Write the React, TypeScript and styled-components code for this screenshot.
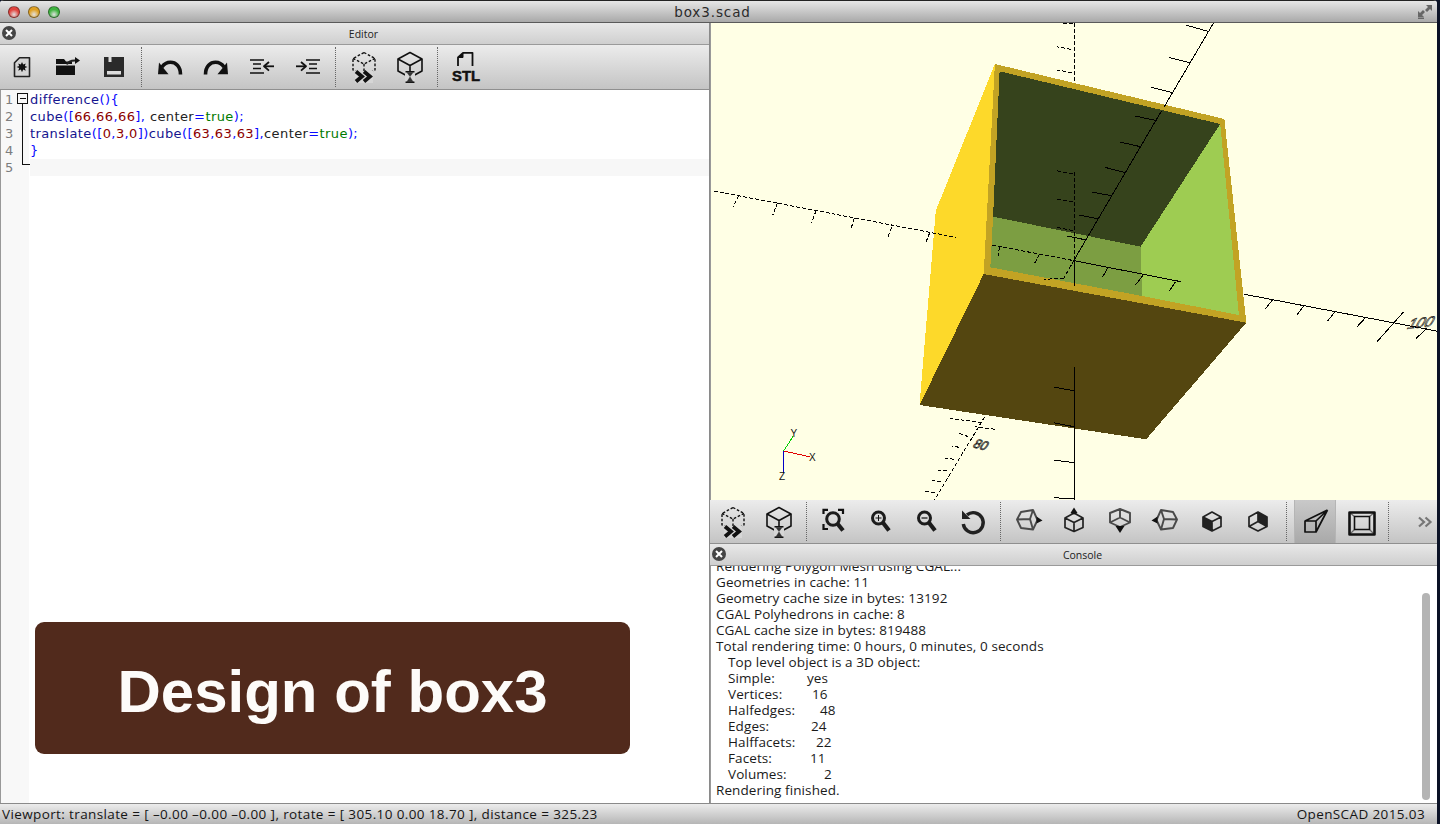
import React from "react";
import styled, { createGlobalStyle } from "styled-components";

const UI = `"Open Sans", "Noto Sans", "DejaVu Sans", sans-serif`;
const CODE = `"DejaVu Sans", "Open Sans", sans-serif`;

const Global = createGlobalStyle`
  html, body { margin: 0; padding: 0; background: #0b1226; overflow: hidden; }
  #root { width: 1440px; height: 824px; }
`;

const Window = styled.div`
  width: 1437px; height: 824px; display: flex; flex-direction: column; overflow: hidden;
  font-family: ${UI}; border-radius: 4px 4px 0 0; color: #111; background: #ddd;
`;
const TitleBar = styled.header`
  height: 23px; flex: none; box-sizing: border-box; position: relative;
  display: flex; align-items: center; justify-content: center; padding-right: 12px;
  background: linear-gradient(#e6e6e6, #a9a9a9); border-bottom: 1px solid #5a5a5a; border-top: 1px solid #222;
  font-family: ${CODE}; font-size: 13.5px; letter-spacing: 0.9px; color: #2b2b2b;
`;
const Lights = styled.div`
  position: absolute; left: 8px; top: 5px; display: flex; gap: 8px;
`;
const Light = styled.span<{ $c: string }>`
  width: 12px; height: 12px; border-radius: 50%; box-sizing: border-box; border: 1px solid rgba(0,0,0,.4);
  background: radial-gradient(circle at 50% 75%, #fff8 0%, ${p => p.$c} 55%, ${p => p.$c} 100%);
`;
const FullScreen = styled.svg`position: absolute; right: 5px; top: 4px;`;
const Main = styled.main`flex: 1; min-height: 0; display: flex;`;
const EditorPane = styled.section`
  width: 710px; flex: none; box-sizing: border-box; display: flex; flex-direction: column; border-right: 1px solid #8a8a8a;
`;
const RightPane = styled.section`flex: 1; min-width: 0; display: flex; flex-direction: column;`;
const DockTitle = styled.div`
  height: 22px; flex: none; box-sizing: border-box; position: relative; display: flex; align-items: center; justify-content: center;
  padding-left: 18px;
  background: linear-gradient(#e8e8e8, #cfcfcf); border-bottom: 1px solid #9a9a9a; font-size: 10.5px; color: #222;
`;
const CloseBadge = styled.span`
  position: absolute; left: 2px; top: 3px; width: 14px; height: 14px; border-radius: 50%; background: #454545;
  display: flex; align-items: center; justify-content: center;
`;
const Toolbar = styled.div<{ $h: number; $off: number }>`
  height: ${p => p.$h}px; flex: none; box-sizing: border-box; display: flex; align-items: center; padding-left: ${p => p.$off}px;
  background: linear-gradient(#ececec, #c4c4c4); border-bottom: 1px solid #8f8f8f;
  margin-left: ${p => (p.$off < 0 ? p.$off : 0)}px;
`;
const ToolButton = styled.div<{ $w?: number; $on?: boolean }>`
  width: ${p => p.$w ?? 46}px; align-self: stretch; flex: none; display: flex; align-items: center; justify-content: center;
  ${p => p.$on && `background: linear-gradient(#c9c9c9, #a9a9a9); border-left: 1px solid #b5b5b5; border-right: 1px solid #b5b5b5; box-sizing: border-box; margin: 0 2px;`}
`;
const Sep = styled.i<{ $l: number; $r: number }>`
  flex: none; align-self: stretch; width: 0; margin: 2px ${p => p.$r}px 2px ${p => p.$l}px; border-left: 1px dotted #666;
`;
const Overflow = styled.div`margin-left: auto; margin-right: 2px; width: 18px; display: flex;`;
const EditorBody = styled.div`flex: 1; min-height: 0; position: relative; display: flex; background: #fff; border-left: 1px solid #999;`;
const Gutter = styled.div`
  width: 28px; flex: none; background: #f8f8f8; box-sizing: border-box; padding-top: 1px; position: relative;
`;
const LineNo = styled.div`
  height: 17px; line-height: 17px; font-family: ${CODE}; font-size: 13px; color: #7d7d7d; padding-left: 4px;
`;
const Fold = styled.svg`position: absolute; left: 16px; top: 2px;`;
const Code = styled.div`flex: 1; padding-top: 1px; min-width: 0; margin-left: 1px;`;
const CodeLine = styled.div<{ $cur?: boolean }>`
  height: 17px; line-height: 17px; font-family: ${CODE}; font-size: 13px; white-space: pre; letter-spacing: 0.4px;
  background: ${p => (p.$cur ? "#f7f7f7" : "transparent")}; color: #222;
`;
const Tok = styled.span<{ $k: "fn" | "p" | "n" | "b" }>`
  color: ${p => ({ fn: "#15158f", p: "#0a0aff", n: "#8b0000", b: "#007a00" }[p.$k])};
`;
const Banner = styled.div`
  position: absolute; left: 34px; top: 532px; width: 595px; height: 132px; border-radius: 9px; background: #512a1c;
  display: flex; align-items: center; justify-content: center; color: #fdfbf9;
  font: bold 60px/1 "Liberation Sans", Arial, sans-serif; padding-top: 7px; box-sizing: border-box;
`;
const Viewport = styled.div`height: 477px; flex: none; background: #ffffe5; overflow: hidden; border-left: 1px solid #999; margin-left: 0;`;
const ConsoleBody = styled.div`flex: 1; min-height: 0; position: relative; overflow: hidden; background: #fff; padding: 0 0 0 5px; border-left: 1px solid #999;`;
const ConsoleRows = styled.div`margin-top: -8px;`;
const Row = styled.div<{ $ind?: boolean }>`
  height: 16px; line-height: 16px; font-size: 13.5px; letter-spacing: 0.1px; white-space: pre; color: #1a1a1a; padding-left: ${p => (p.$ind ? 12 : 0)}px; display: flex;
`;
const StatLabel = styled.span<{ $w: number }>`width: ${p => p.$w}px; flex: none;`;
const Scroll = styled.div`
  position: absolute; right: 7px; top: 27px; width: 8px; height: 207px; border-radius: 4px; background: #b4b4b4;
`;
const StatusBar = styled.footer`
  height: 21px; flex: none; box-sizing: border-box; display: flex; justify-content: space-between; align-items: center; padding: 0 12px 0 2px;
  background: linear-gradient(#ececec, #b6b6b6); border-top: 1px solid #8a8a8a; font-size: 13.5px; letter-spacing: 0.38px; color: #151515;
`;

const Svg = ({ children, w = 32, h = 32 }: { children: React.ReactNode; w?: number; h?: number }) => (
  <svg width={w} height={h} viewBox={`0 0 ${w} ${h}`} fill="none" stroke="#111" strokeWidth="1.8" strokeLinejoin="round">{children}</svg>
);

const NewIcon = () => (
  <Svg>
    <path d="M13.5 6.7H23.5V25.5H8.5V11.7Z" fill="#d4d4d4" stroke="#222" strokeWidth="1.6" />
    <path d="M16 11l1.2 2.6 2.5-1.2-.8 2.7 2.6 1-2.6 1 .8 2.7-2.5-1.2-1.2 2.6-1.2-2.6-2.5 1.2.8-2.7-2.6-1 2.6-1-.8-2.7 2.5 1.2z" fill="#111" stroke="none" />
  </Svg>
);
const OpenIcon = () => (
  <Svg>
    <path d="M4 8h8l2 2.5h6V13H4Z" fill="#111" stroke="none" />
    <rect x="4" y="14.5" width="19" height="9.5" fill="#111" stroke="none" />
    <path d="M15 13.5c1-3 4-4 8-4" stroke="#222" strokeWidth="2" />
    <path d="M23 6l5 3.5-5 3.5Z" fill="#111" stroke="none" />
  </Svg>
);
const SaveIcon = () => (
  <Svg>
    <path d="M6 6h20v20H6Z" fill="#2a2a2a" stroke="none" />
    <rect x="10.5" y="6" width="3" height="5" fill="#ddd" stroke="none" />
    <rect x="9" y="20" width="14" height="3.5" fill="#ddd" stroke="none" />
  </Svg>
);
const UndoIcon = ({ flip }: { flip?: boolean }) => (
  <Svg>
    <g transform={flip ? "matrix(-1 0 0 1 32 0)" : undefined}>
      <path d="M26.5 23.5C26.5 15 21.5 11.3 16.5 11.3 12.5 11.3 10 13 8 16" strokeWidth="3.6" strokeLinejoin="miter" />
      <path d="M4 23.3h10.5L5 11.5Z" fill="#111" stroke="none" />
    </g>
  </Svg>
);
const LinesIcon = ({ rev }: { rev?: boolean }) => (
  <Svg>
    <g transform={rev ? "matrix(-1 0 0 1 32 0)" : undefined} strokeWidth="1.3">
      <path d="M4 9h14M7 13h8M7 17.5h8M4 22h14" />
      <path d="M28 15.3H19" strokeWidth="1.8" />
      <path d="M23 11l-5 4.3 5 4.3" strokeWidth="1.8" />
    </g>
  </Svg>
);
const PreviewIcon = () => (
  <Svg>
    <g strokeWidth="1.4" strokeDasharray="2.6 1.8" stroke="#111">
      <path d="M16 1.5 27 7.5V19L16 25 5 19V7.5Z" />
      <path d="M5 7.5 16 13 27 7.5M16 13V20" />
    </g>
    <path d="M7 20h18v12H7Z" fill="#d6d6d6" stroke="none" />
    <path d="M8 20.5l6 5-6 5M16 20.5l6 5-6 5" strokeWidth="3.8" strokeLinejoin="miter" />
  </Svg>
);
const RenderIcon = () => (
  <Svg>
    <path d="M16 1.5 28 8V20L16 26.5 4 20V8Z" strokeWidth="1.6" />
    <path d="M4 8 16 14.5 28 8M16 14.5V21" strokeWidth="1.6" />
    <path d="M11 20.5h10v11.5H11Z" fill="#d6d6d6" stroke="none" />
    <path d="M11.5 20.8h9M11.5 31.2h9" strokeWidth="1.5" />
    <path d="M13 21.5l3 4 3-4ZM12.8 31l3.2-5 3.2 5Z" fill="#333" stroke="#333" strokeWidth="0.5" />
  </Svg>
);
const StlIcon = () => (
  <Svg>
    <path d="M8 15V6.5L13 1.8H22.5V15" strokeWidth="1.8" />
    <path d="M8.5 6.5h4.5V2" fill="#111" strokeWidth="1" />
    <text x="2" y="29.5" fontFamily="Liberation Sans, sans-serif" fontWeight="bold" fontSize="15" textLength="28" lengthAdjust="spacingAndGlyphs" fill="#111" stroke="#111" strokeWidth="0.5">STL</text>
  </Svg>
);
const Lens = ({ cx = 14.5, cy = 12, ex = 25, ey = 24.5, r = 6, children }: any) => (
  <>
    <circle cx={cx} cy={cy} r={r} strokeWidth="3" stroke="#1c1c1c" />
    <path d={`M${cx + r * 0.75} ${cy + r * 0.8}L${ex} ${ey}`} strokeWidth="4.2" stroke="#1c1c1c" />
    {children}
  </>
);
const ZoomAllIcon = () => (
  <Svg>
    <Lens cx={16} cy={13} r={6.3} ex={26} ey={24.5} />
    <path d="M6.5 8V3.8H11M21 3.8h5V8M6.5 18v5H11" strokeWidth="2.2" stroke="#111" strokeLinejoin="miter" />
  </Svg>
);
const ZoomInIcon = () => (
  <Svg><Lens><path d="M11.5 12h6M14.5 9v6" strokeWidth="1" /></Lens></Svg>
);
const ZoomOutIcon = () => (
  <Svg><Lens><path d="M11.5 12h6" strokeWidth="1.2" /></Lens></Svg>
);
const ResetIcon = () => (
  <Svg>
    <path d="M10 8.8A10 10 0 1 1 6.3 18" strokeWidth="3.4" stroke="#222" />
    <path d="M5 4.5V13H13.5Z" fill="#222" stroke="none" />
  </Svg>
);
const Cube = ({ mode }: { mode: "r" | "t" | "u" | "l" | "f" | "b" }) => {
  if (mode === "r" || mode === "l") return (
    <Svg><g transform={mode === "l" ? "matrix(-1 0 0 1 32 0)" : undefined}>
      <path d="M9 6 21 4 25.5 14 21 23.5 9 22 5 13.5Z M5 13.5 18 13 21 4 M18 13 21 23.5" stroke="#4a4a4a" strokeWidth="1.9" />
      <path d="M24.5 10.5 30.5 14.5 24.5 17.5Z" fill="#111" stroke="none" />
    </g></Svg>
  );
  if (mode === "t") return (
    <Svg>
      <path d="M16 7 25 12V21.5L16 25.5 7 21.5V12Z M7 12 16 16.5 25 12 M16 16.5V25" strokeWidth="1.7" stroke="#222" />
      <path d="M12.5 7 16 1.5 19.5 7 16 8.5Z" fill="#111" stroke="none" />
    </Svg>
  );
  if (mode === "u") return (
    <Svg>
      <path d="M16 3 26 7V16.5L16 21 6 16.5V7Z M16 3V11.5 M6 16.5 16 11.5 26 16.5" stroke="#4a4a4a" strokeWidth="1.9" />
      <path d="M11.5 20 20.5 20 16 27Z" fill="#111" stroke="none" />
    </Svg>
  );
  return (
    <Svg>
      {mode === "f"
        ? <path d="M7 11 16 15.5V25L7 20.5Z" fill="#222" stroke="none" />
        : <path d="M16 6 25 11V20.5L16 15.5Z" fill="#222" stroke="none" />}
      <path d={mode === "f"
        ? "M16 6 25 11V20.5L16 25 7 20.5V11Z M7 11 16 15.5 25 11 M16 15.5V25"
        : "M16 6 25 11V20.5L16 25 7 20.5V11Z M16 6V15.5 M7 20.5 16 15.5 25 20.5"} strokeWidth="1.7" stroke="#222" />
    </Svg>
  );
};
const PerspIcon = () => (
  <Svg><path d="M6 15H17V26H6Z M6 15 28.5 4 M17 15 28.5 4 M17 26 28.5 4" strokeWidth="1.7" /></Svg>
);
const OrthoIcon = () => (
  <Svg>
    <path d="M3.5 6.5 8.5 10.5M28.5 6.5 23.5 10.5M3.5 28.5 8.5 23.5M28.5 28.5 23.5 23.5" stroke="#666" strokeWidth="1.2" />
    <rect x="3.5" y="6.5" width="25" height="22" strokeWidth="2.6" />
    <rect x="8.5" y="10.5" width="15" height="13" strokeWidth="1.6" />
  </Svg>
);
const MoreIcon = () => (
  <svg width="16" height="12" viewBox="0 0 16 12" fill="none" stroke="#777" strokeWidth="2.2">
    <path d="M2 1.5 7 6 2 10.5M8.5 1.5 13.5 6 8.5 10.5" />
  </svg>
);
const CloseIcon = () => (
  <svg width="8" height="8" viewBox="0 0 8 8" stroke="#fff" strokeWidth="2"><path d="M1 1 7 7M7 1 1 7" /></svg>
);

// Scene coordinates are read in a 1568x1440 space that maps onto 730x480 px.
const sx = 1 / 2.148, sy = 1 / 3;
const P = (...a: number[]) => {
  const out: string[] = [];
  for (let i = 0; i < a.length; i += 2) out.push(`${(a[i] * sx).toFixed(1)},${(a[i + 1] * sy).toFixed(1)}`);
  return out.join(" ");
};
const Poly = ({ c, a }: { c: string; a: number[] }) => <polygon points={P(...a)} fill={c} />;
const Seg = ({ a, dash, c = "#000" }: { a: number[]; dash?: boolean; c?: string }) => (
  <polyline points={P(...a)} stroke={c} strokeWidth="1" fill="none" strokeDasharray={dash ? "4 2" : undefined} />
);

const solidTicks = [
  [1072, 35, 1022, 15], [1030, 128, 985, 112], [995, 218, 948, 202], [960, 302, 913, 288], [925, 380, 880, 366],
  [893, 458, 848, 442], [862, 527, 820, 516], [835, 597, 793, 585], [808, 660, 767, 648],
  [855, 742, 843, 772], [932, 762, 914, 795], [1000, 785, 987, 812],
  [1208, 840, 1192, 868], [1275, 858, 1260, 886], [1342, 876, 1326, 904], [1408, 893, 1390, 920], [1490, 875, 1433, 965], [1540, 925, 1516, 956],
  [782, 1112, 740, 1102], [782, 1220, 738, 1208], [782, 1328, 738, 1320], [782, 1437, 738, 1433],
];
const dashTicks = [
  [62, 525, 50, 560], [145, 548, 135, 585], [228, 572, 218, 608], [310, 595, 302, 630], [390, 622, 382, 652], [472, 638, 463, 670],
  [622, 680, 618, 715], [708, 703, 695, 735],
  [780, 12, 748, 8], [775, 88, 745, 80], [778, 158, 745, 150], [780, 462, 745, 452], [780, 545, 745, 538], [780, 632, 745, 622], [760, 775, 718, 778],
  [585, 1208, 515, 1195], [612, 1228, 570, 1220], [555, 1250, 535, 1240], [535, 1282, 520, 1278], [525, 1318, 505, 1315], [510, 1352, 490, 1350], [497, 1385, 477, 1382], [483, 1418, 462, 1414],
];

const Scene = () => (
  <svg width="726" height="477" viewBox="0 0 726 477" shapeRendering="crispEdges" style={{ display: "block" }}>
    <g transform="translate(-1 -3)">
      <Poly c="#fdd92a" a={[612, 132, 485, 572, 450, 1155, 588, 762]} />
      <Poly c="#c2a324" a={[612, 132, 1105, 297, 1152, 908, 588, 762]} />
      <Poly c="#36431c" a={[622, 154, 1096, 312, 925, 680, 608, 590]} />
      <Poly c="#7c9e42" a={[608, 590, 925, 680, 928, 828, 602, 742]} />
      <Poly c="#9ecc52" a={[1096, 312, 1136, 885, 928, 828, 925, 680]} />
      <Poly c="#544610" a={[588, 762, 1152, 908, 937, 1258, 450, 1155]} />
      <Seg dash a={[782, 8, 782, 190]} />
      <Seg dash a={[782, 455, 782, 720]} />
      <Seg a={[782, 720, 782, 798]} />
      <Seg a={[782, 1040, 782, 1440]} />
      <Seg a={[1082, 8, 975, 262]} />
      <Seg a={[970, 272, 782, 720]} />
      <Seg dash a={[782, 720, 760, 775]} />
      <Seg dash a={[590, 1190, 482, 1440]} />
      <Seg dash a={[8, 513, 528, 652]} />
      <Seg dash a={[605, 675, 782, 722]} />
      <Seg a={[782, 722, 1012, 785]} />
      <Seg a={[1148, 823, 1568, 935]} />
      {solidTicks.map((t, i) => <Seg key={i} a={t} />)}
      {dashTicks.map((t, i) => <Seg key={i} dash a={t} />)}
      <Seg c="#00d000" a={[158, 1293, 178, 1250]} />
      <Seg c="#e00000" a={[158, 1293, 214, 1310]} />
      <Seg c="#0000c8" a={[158, 1293, 158, 1360]} />
      <g shapeRendering="auto" fontFamily="Liberation Sans, sans-serif" fontSize="10" fill="#111">
        <text x="80.5" y="417">Y</text>
        <text x="99" y="441">X</text>
        <text x="69" y="460">Z</text>
        <text transform="matrix(1 -0.1 -0.55 1 696 309)" fontSize="15" fill="none" stroke="#111" strokeWidth="0.7">100</text>
        <text transform="matrix(0.9 0.25 -0.6 0.9 262 427)" fontSize="13" fill="none" stroke="#111" strokeWidth="0.7">80</text>
      </g>
    </g>
  </svg>
);

const stats: [string, number, string][] = [
  ["Simple:", 79, "yes"], ["Vertices:", 84, "16"], ["Halfedges:", 92, "48"], ["Edges:", 83, "24"],
  ["Halffacets:", 88, "22"], ["Facets:", 82, "11"], ["Volumes:", 96, "2"],
];

export default function App() {
  return (
    <>
      <Global />
      <Window>
        <TitleBar>
          <Lights>
            <Light $c="#e0443e" /><Light $c="#dfa023" /><Light $c="#3fb33f" />
          </Lights>
          box3.scad
          <FullScreen width="14" height="14" viewBox="0 0 14 14" fill="#666">
            <path d="M8 0h6v6l-2-2-3 3-2-2 3-3zM0 14h6v-1.5H0zM0 12V6l2 2 3-3 2 2-3 3 2 2z" />
          </FullScreen>
        </TitleBar>
        <Main>
          <EditorPane>
            <DockTitle><CloseBadge><CloseIcon /></CloseBadge>Editor</DockTitle>
            <Toolbar $h={45} $off={-1}>
              <ToolButton><NewIcon /></ToolButton>
              <ToolButton><OpenIcon /></ToolButton>
              <ToolButton><SaveIcon /></ToolButton>
              <Sep $l={4} $r={5} />
              <ToolButton><UndoIcon /></ToolButton>
              <ToolButton><UndoIcon flip /></ToolButton>
              <ToolButton><LinesIcon /></ToolButton>
              <ToolButton><LinesIcon rev /></ToolButton>
              <Sep $l={4} $r={5} />
              <ToolButton><PreviewIcon /></ToolButton>
              <ToolButton><RenderIcon /></ToolButton>
              <Sep $l={4} $r={5} />
              <ToolButton><StlIcon /></ToolButton>
            </Toolbar>
            <EditorBody>
              <Gutter>
                {[1, 2, 3, 4, 5].map(n => <LineNo key={n}>{n}</LineNo>)}
                <Fold width="14" height="76" viewBox="0 0 14 76" fill="none" stroke="#111" strokeWidth="1" shapeRendering="crispEdges">
                  <rect x="0.5" y="1.5" width="10" height="10" />
                  <path d="M2.5 6.5h6M5.5 12V72.5H13" />
                </Fold>
              </Gutter>
              <Code>
                <CodeLine><Tok $k="fn">difference</Tok><Tok $k="p">(){"{"}</Tok></CodeLine>
                <CodeLine><Tok $k="fn">cube</Tok><Tok $k="p">([</Tok><Tok $k="n">66</Tok><Tok $k="p">,</Tok><Tok $k="n">66</Tok><Tok $k="p">,</Tok><Tok $k="n">66</Tok><Tok $k="p">],</Tok> center<Tok $k="p">=</Tok><Tok $k="b">true</Tok><Tok $k="p">);</Tok></CodeLine>
                <CodeLine><Tok $k="fn">translate</Tok><Tok $k="p">([</Tok><Tok $k="n">0</Tok><Tok $k="p">,</Tok><Tok $k="n">3</Tok><Tok $k="p">,</Tok><Tok $k="n">0</Tok><Tok $k="p">])</Tok><Tok $k="fn">cube</Tok><Tok $k="p">([</Tok><Tok $k="n">63</Tok><Tok $k="p">,</Tok><Tok $k="n">63</Tok><Tok $k="p">,</Tok><Tok $k="n">63</Tok><Tok $k="p">],</Tok>center<Tok $k="p">=</Tok><Tok $k="b">true</Tok><Tok $k="p">);</Tok></CodeLine>
                <CodeLine><Tok $k="p">{"}"}</Tok></CodeLine>
                <CodeLine $cur> </CodeLine>
              </Code>
              <Banner>Design of box3</Banner>
            </EditorBody>
          </EditorPane>
          <RightPane>
            <Viewport><Scene /></Viewport>
            <Toolbar $h={44} $off={0}>
              <ToolButton><PreviewIcon /></ToolButton>
              <ToolButton><RenderIcon /></ToolButton>
              <Sep $l={4} $r={3} />
              <ToolButton $w={46.5}><ZoomAllIcon /></ToolButton>
              <ToolButton $w={46.5}><ZoomInIcon /></ToolButton>
              <ToolButton $w={46.5}><ZoomOutIcon /></ToolButton>
              <ToolButton $w={46.5}><ResetIcon /></ToolButton>
              <Sep $l={4} $r={4} />
              <ToolButton><Cube mode="r" /></ToolButton>
              <ToolButton><Cube mode="t" /></ToolButton>
              <ToolButton><Cube mode="u" /></ToolButton>
              <ToolButton><Cube mode="l" /></ToolButton>
              <ToolButton><Cube mode="f" /></ToolButton>
              <ToolButton><Cube mode="b" /></ToolButton>
              <Sep $l={5} $r={5} />
              <ToolButton $w={42} $on><PerspIcon /></ToolButton>
              <ToolButton $w={48}><OrthoIcon /></ToolButton>
              <Sep $l={2} $r={0} />
              <Overflow><MoreIcon /></Overflow>
            </Toolbar>
            <DockTitle><CloseBadge><CloseIcon /></CloseBadge>Console</DockTitle>
            <ConsoleBody>
              <ConsoleRows>
                <Row>Rendering Polygon Mesh using CGAL...</Row>
                <Row>Geometries in cache: 11</Row>
                <Row>Geometry cache size in bytes: 13192</Row>
                <Row>CGAL Polyhedrons in cache: 8</Row>
                <Row>CGAL cache size in bytes: 819488</Row>
                <Row>Total rendering time: 0 hours, 0 minutes, 0 seconds</Row>
                <Row $ind>Top level object is a 3D object:</Row>
                {stats.map(([l, w, v]) => (
                  <Row $ind key={l}><StatLabel $w={w}>{l}</StatLabel>{v}</Row>
                ))}
                <Row>Rendering finished.</Row>
              </ConsoleRows>
              <Scroll />
            </ConsoleBody>
          </RightPane>
        </Main>
        <StatusBar>
          <span>Viewport: translate = [ –0.00 –0.00 –0.00 ], rotate = [ 305.10 0.00 18.70 ], distance = 325.23</span>
          <span>OpenSCAD 2015.03</span>
        </StatusBar>
      </Window>
    </>
  );
}
